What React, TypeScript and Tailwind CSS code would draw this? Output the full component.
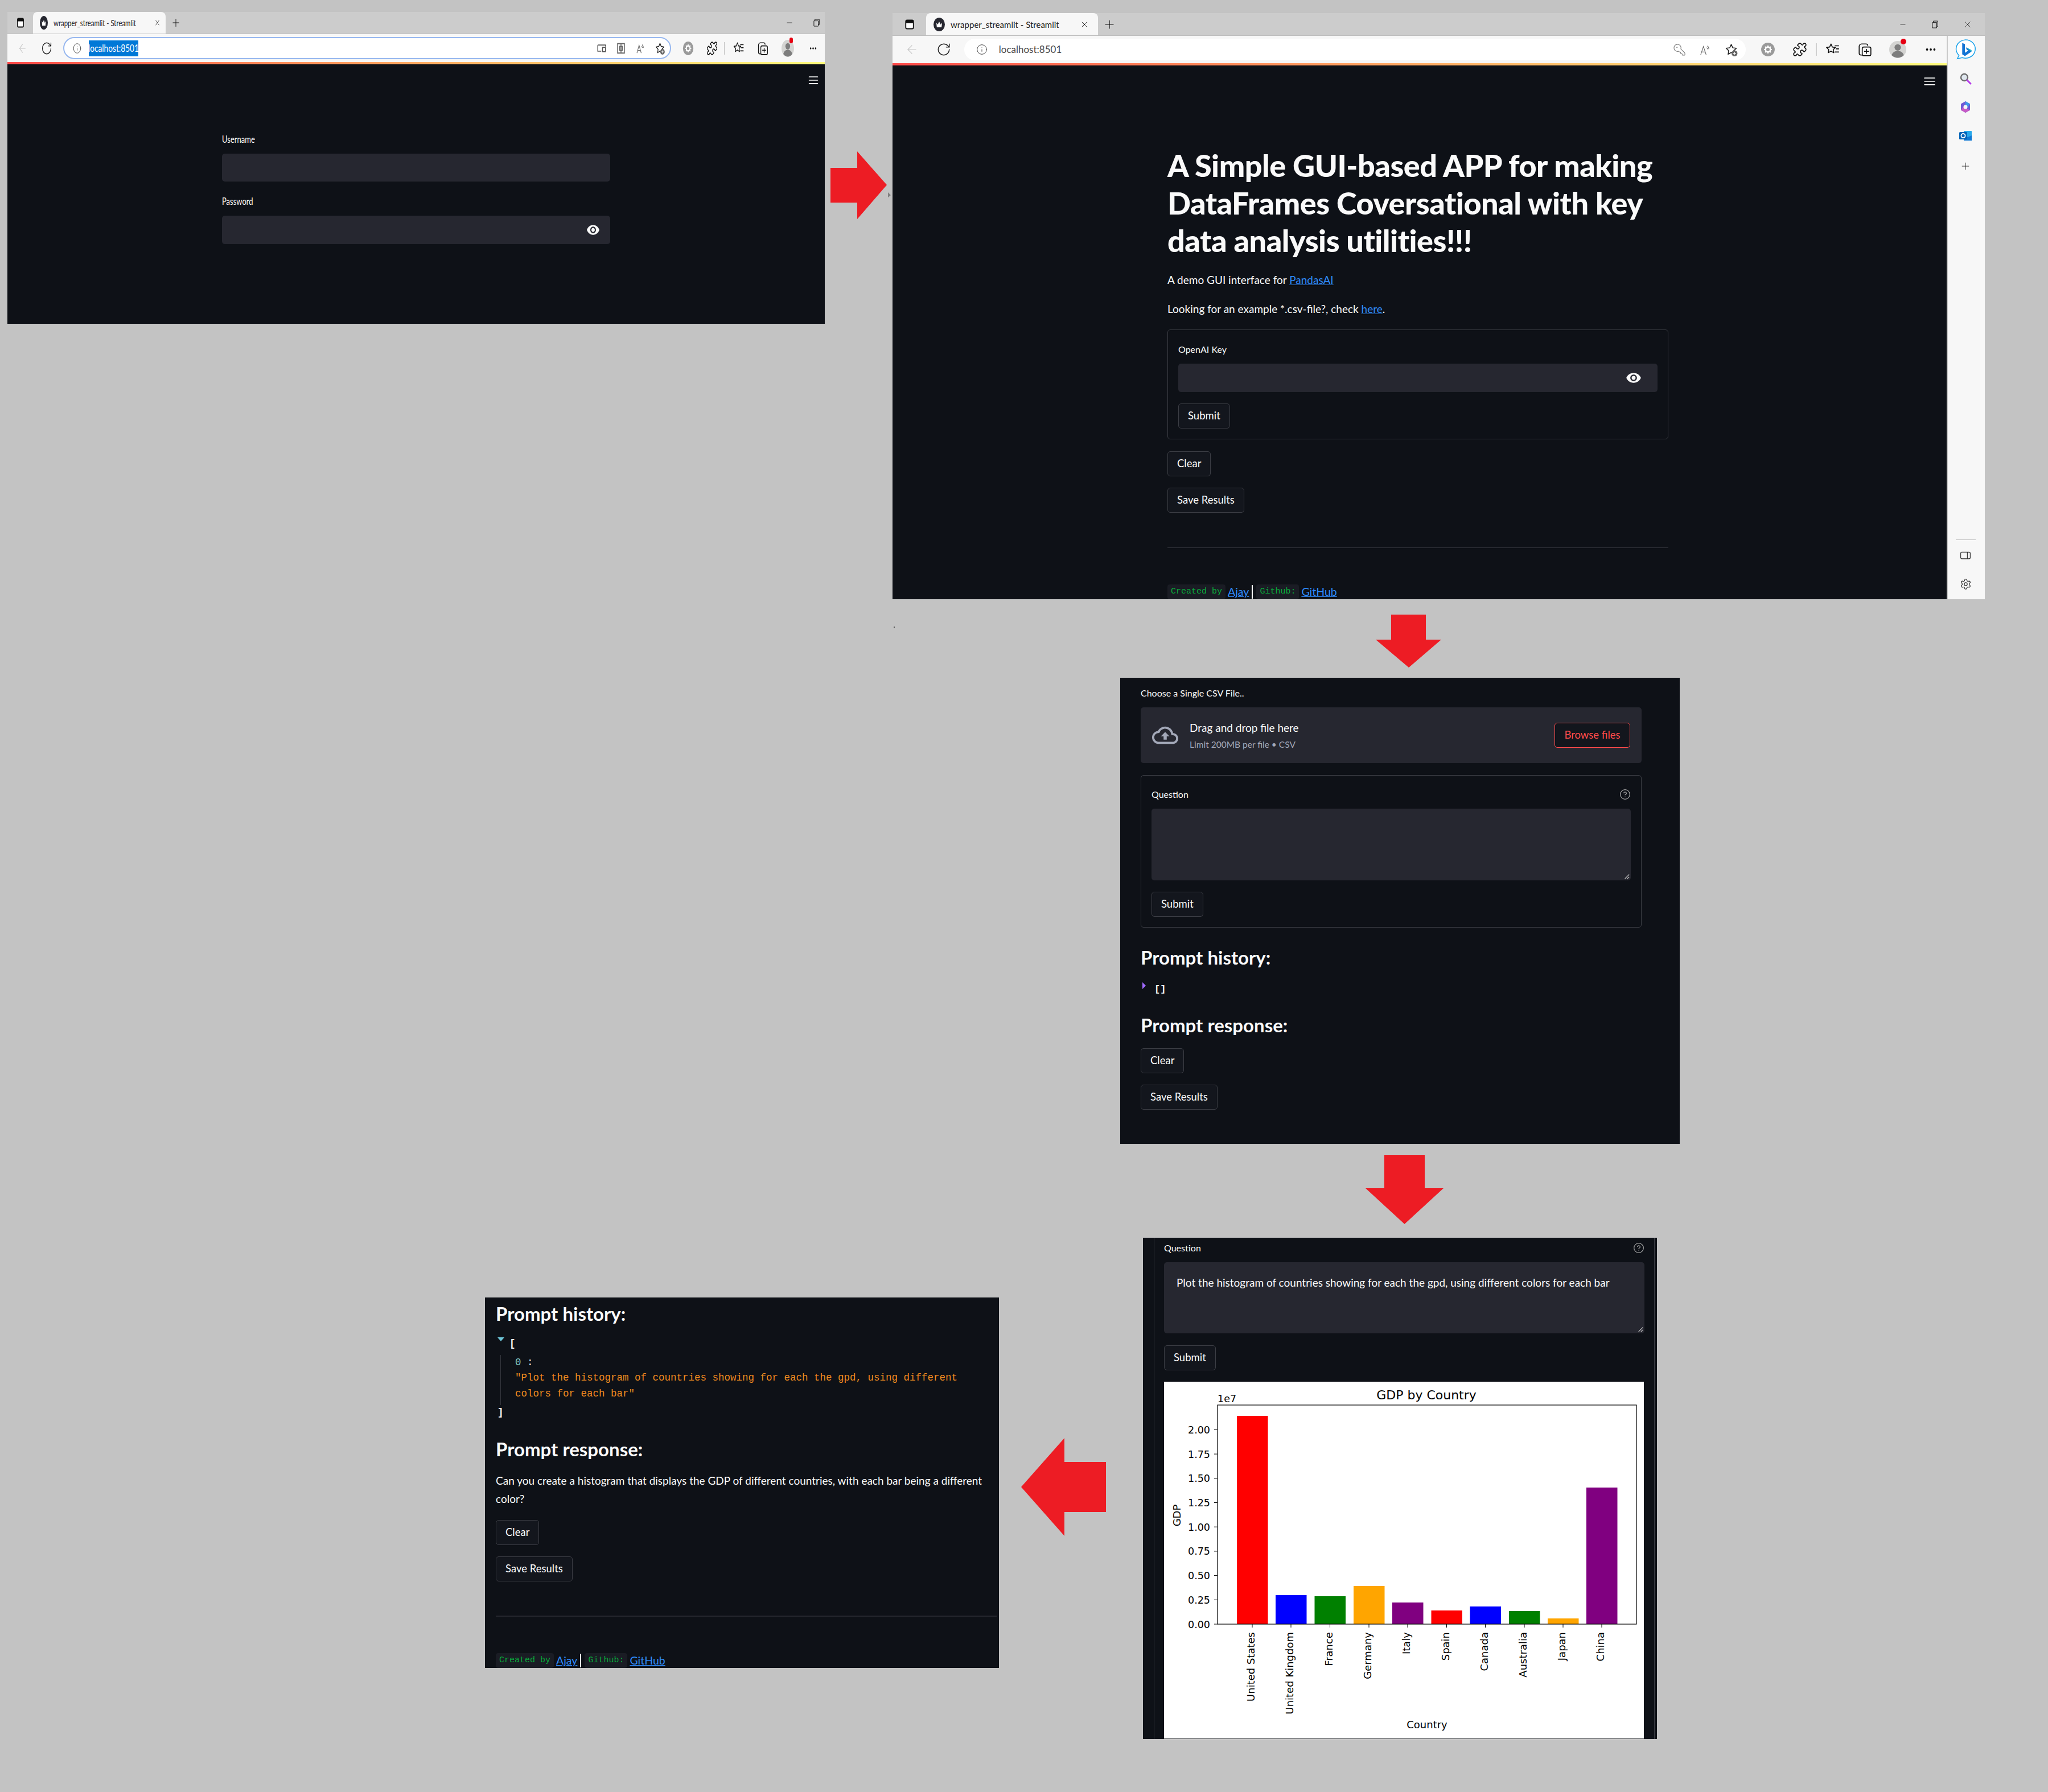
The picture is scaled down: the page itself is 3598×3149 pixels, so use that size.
import { ReactNode } from "react"
import { ArrowLeft, CircleHelp, Info, KeyRound, Menu, Minus, MoreHorizontal, Plus, Puzzle, RotateCw, Settings, X } from "lucide-react"

const EYE =
    "M12 4.5C7 4.5 2.73 7.61 1 12c1.73 4.39 6 7.5 11 7.5s9.27-3.11 11-7.5c-1.73-4.39-6-7.5-11-7.5zM12 17c-2.76 0-5-2.24-5-5s2.24-5 5-5 5 2.24 5 5-2.24 5-5 5zm0-8c-1.66 0-3 1.34-3 3s1.34 3 3 3 3-1.34 3-3-1.34-3-3-3z"
const CLOUD =
    "M19.35 10.04C18.67 6.59 15.64 4 12 4 9.11 4 6.6 5.64 5.35 8.04 2.34 8.36 0 10.91 0 14c0 3.31 2.69 6 6 6h13c2.76 0 5-2.24 5-5 0-2.64-2.05-4.78-4.65-4.96zM19 18H6c-2.21 0-4-1.79-4-4 0-2.05 1.53-3.76 3.56-3.97l1.07-.11.5-.95C8.08 7.14 9.94 6 12 6c2.62 0 4.88 1.86 5.39 4.43l.3 1.5 1.53.11c1.56.1 2.78 1.41 2.78 2.96 0 1.65-1.35 3-3 3zM8 13h2.55v3h2.9v-3H16l-4-4z"

// small toolbar glyphs, drawn on a 24 box and stretched for the squeezed window
function Glyph({ className, children }: { className: string; children: ReactNode }) {
    return (
        <svg viewBox="0 0 24 24" preserveAspectRatio="none" className={className}>
            {children}
        </svg>
    )
}

function FavStar() {
    return <path d="M12 3l2.6 5.6 6 .8-4.4 4.2 1.1 6-5.3-3-5.3 3 1.1-6L3.4 9.4l6-.8z" fill="none" stroke="#222" strokeWidth="1.5" strokeLinejoin="round" />
}

function Favicon({ className }: { className: string }) {
    return (
        <Glyph className={className}>
            <circle cx="12" cy="12" r="12" fill="#262730" />
            <path d="M6 9l3 3 3-5 3 5 3-3-1 8H7z" fill="#fff" />
        </Glyph>
    )
}

function Toolbar({ narrow }: { narrow: boolean }) {
    const slot = narrow ? "w-[42px]" : "w-[56px]"
    const icon = narrow ? "w-[20px] h-[26px]" : "w-[26px] h-[26px]"
    const small = narrow ? "w-[17px] h-[24px]" : "w-[24px] h-[24px]"
    return (
        <div className={`flex items-center bg-[#f7f7f7] ${narrow ? "h-[49px] pl-[6px]" : "h-[48px] pl-[6px]"}`}>
            <div className={`${slot} flex justify-center`}>
                <ArrowLeft preserveAspectRatio="none" strokeWidth={1.2} className={`${small} text-[#c4c4c4]`} />
            </div>
            <div className={`${slot} flex justify-center`}>
                <RotateCw preserveAspectRatio="none" strokeWidth={1.4} className={`${icon} text-[#222]`} />
            </div>
            {narrow ? (
                <div className="ml-[8px] flex h-[39px] w-[1069px] items-center rounded-full border-2 border-[#98b8ef] bg-white pl-[15px] pr-[8px]">
                    <Info preserveAspectRatio="none" strokeWidth={1.2} className="h-[20px] w-[15px] text-[#444]" />
                    <span className="ml-[13px] flex h-[28px] w-[87px] items-center justify-center bg-[#0078d7] text-white">
                        <span className="origin-center scale-x-[0.76] whitespace-nowrap text-[18px]">localhost:8501</span>
                    </span>
                    <div className="ml-auto flex items-center gap-[16px]">
                        <Glyph className="h-[20px] w-[18px]">
                            <path d="M3 5h18v3M3 5v13h8M14 10h7v9h-7z" fill="none" stroke="#555" strokeWidth="2" />
                        </Glyph>
                        <Glyph className="h-[22px] w-[18px]">
                            <path d="M4 3h16v18H4zM9 8h6v8H9zM12 3v18" fill="none" stroke="#666" strokeWidth="2" />
                        </Glyph>
                        <Glyph className="h-[22px] w-[18px]">
                            <path d="M4 21l5-15 5 15M6 16h6M16 5c2 1 3 3 3 6M15 8c1 .6 1.6 2 1.6 3" fill="none" stroke="#666" strokeWidth="1.4" />
                        </Glyph>
                        <Glyph className="h-[24px] w-[19px]">
                            <FavStar />
                            <circle cx="17.5" cy="18" r="5" fill="#666" />
                            <path d="M17.5 15.5v5M15 18h5" stroke="#fff" strokeWidth="1.2" />
                        </Glyph>
                    </div>
                </div>
            ) : (
                <div className="ml-[8px] flex h-[38px] w-[1376px] items-center rounded-full bg-white pl-[21px] pr-[13px]">
                    <Info strokeWidth={1.2} className="h-[20px] w-[20px] text-[#444]" />
                    <span className="ml-[20px] text-[17px] text-[#4a4a4a]">localhost:8501</span>
                    <div className="ml-auto flex items-center gap-[22px]">
                        <KeyRound strokeWidth={1.1} className="h-[23px] w-[23px] scale-x-[-1] text-[#777]" />
                        <Glyph className="h-[23px] w-[23px]">
                            <path d="M4 21l5-15 5 15M6 16h6M16 5c2 1 3 3 3 6M15 8c1 .6 1.6 2 1.6 3" fill="none" stroke="#666" strokeWidth="1.2" />
                        </Glyph>
                        <Glyph className="h-[25px] w-[25px]">
                            <FavStar />
                            <circle cx="17.5" cy="18" r="5" fill="#666" />
                            <path d="M17.5 15.5v5M15 18h5" stroke="#fff" strokeWidth="1.2" />
                        </Glyph>
                    </div>
                </div>
            )}
            <div className={`${narrow ? "ml-[9px]" : "ml-[11px]"} ${slot} flex justify-center`}>
                <div className="relative">
                    <Glyph className={icon}>
                        <circle cx="12" cy="12" r="11" fill="#9a9a9a" />
                        <circle cx="12" cy="12" r="4" fill="none" stroke="#fff" strokeWidth="2.4" />
                        <path d="M12 5.5v3M12 15.5v3M5.5 12h3M15.5 12h3M7.4 7.4l2 2M14.6 14.6l2 2M16.6 7.4l-2 2M9.4 14.6l-2 2" stroke="#fff" strokeWidth="2" />
                    </Glyph>
                </div>
            </div>
            <div className={`${slot} flex justify-center`}>
                <Puzzle preserveAspectRatio="none" strokeWidth={1.5} className={`${icon} text-[#111]`} />
            </div>
            <div className="h-[22px] w-[2px] shrink-0 bg-[#cfcfcf]" />
            <div className={`${narrow ? "ml-[3px]" : "ml-[1px]"} ${slot} flex justify-center`}>
                <Glyph className={icon}>
                    <path d="M9 3l2.2 5 5 .7-3.6 3.5.9 5-4.5-2.5-4.5 2.5.9-5L1.8 8.700l5-.7zM15 6h7M17 11h5M15 16h7" fill="none" stroke="#111" strokeWidth="1.5" strokeLinejoin="round" />
                </Glyph>
            </div>
            <div className={`${slot} flex justify-center`}>
                <Glyph className={icon}>
                    <path d="M8 21H6a3 3 0 0 1-3-3V7a4 4 0 0 1 4-4h7a3 3 0 0 1 3 3" fill="none" stroke="#111" strokeWidth="1.5" />
                    <rect x="8" y="8" width="14" height="14" rx="2.500" fill="#f7f7f7" stroke="#111" strokeWidth="1.5" />
                    <path d="M15 11v8M11 15h8" stroke="#111" strokeWidth="1.5" />
                </Glyph>
            </div>
            <div className={`${narrow ? "ml-[2px]" : "ml-[2px]"} ${slot} relative flex justify-center`}>
                <Glyph className={narrow ? "h-[30px] w-[22px]" : "h-[30px] w-[30px]"}>
                    <circle cx="12" cy="12" r="12" fill="#d4d4d2" />
                    <circle cx="12" cy="9" r="4.500" fill="#7d7d7d" />
                    <path d="M3.500 20c1-4 4.500-6 8.500-6s7.500 2 8.500 6a12 12 0 0 1-17 0z" fill="#7d7d7d" />
                </Glyph>
                <span className={`absolute top-[-4px] rounded-full bg-[#e60012] ${narrow ? "left-[24px] h-[10px] w-[6px]" : "left-[33px] h-[10px] w-[10px]"}`} />
            </div>
            <div className={`${narrow ? "ml-[2px]" : "ml-[2px]"} ${slot} flex justify-center`}>
                <MoreHorizontal preserveAspectRatio="none" strokeWidth={2.2} className={narrow ? "h-[20px] w-[15px] text-[#111]" : "h-[22px] w-[22px] text-[#111]"} />
            </div>
        </div>
    )
}

function EdgeRail() {
    return (
        <div className="flex w-[67px] flex-col items-center border-l-2 border-[#c9c9c9] bg-[#f7f7f7] pr-[3px]">
            <svg viewBox="0 0 40 40" className="mt-[5px] h-[38px] w-[38px]">
                <path d="M20 2a18 17 0 1 1-6 33l-9 2 3-6A18 17 0 0 1 20 2z" fill="#fff" stroke="#1aa2ea" strokeWidth="1.600" />
                <path d="M14 8l5 2v16l6-4-3-2-1-4 10 5v3l-12 8-5-3z" fill="#1474d4" />
                <path d="M21 16l10 5v3z" fill="#23c4c8" />
            </svg>
            <svg viewBox="0 0 24 24" className="mt-[21px] h-[24px] w-[24px]">
                <circle cx="10" cy="9" r="6" fill="#dfe7ee" stroke="#6e6e6e" strokeWidth="2.400" />
                <path d="M15 14l6 6" stroke="#b63bea" strokeWidth="3" strokeLinecap="round" />
            </svg>
            <svg viewBox="0 0 24 24" className="mt-[25px] h-[24px] w-[24px]">
                <path d="M12 2l8 4.500v11L12 22l-8-4.500v-11z" fill="#6f5bd6" />
                <path d="M12 2l8 4.500-4 5.500-4-2z" fill="#3f9be8" />
                <path d="M4 17.500L8 12l4 2 8 3.500-8 4.500z" fill="#c65bc6" />
                <circle cx="12" cy="12" r="3.500" fill="#f7f7f7" />
            </svg>
            <svg viewBox="0 0 24 24" className="mt-[26px] h-[24px] w-[24px]">
                <rect x="9" y="4" width="14" height="17" rx="1" fill="#28a8ea" />
                <path d="M9 12l7 3 7-3v9H9z" fill="#0f78d4" />
                <rect x="1" y="6" width="14" height="13" rx="1.500" fill="#0364b8" />
                <circle cx="8" cy="12.500" r="3.600" fill="none" stroke="#fff" strokeWidth="1.800" />
            </svg>
            <Plus strokeWidth={1} className="mt-[32px] h-[20px] w-[20px] text-[#111]" />
            <div className="mt-auto h-[1px] w-[35px] bg-[#b8b8b8]" />
            <svg viewBox="0 0 24 24" className="mt-[17px] h-[20px] w-[20px]">
                <rect x="2" y="5" width="20" height="14" rx="2" fill="none" stroke="#222" strokeWidth="1.300" />
                <path d="M16 5v14" stroke="#222" strokeWidth="1.300" />
            </svg>
            <Settings strokeWidth={1.3} className="mb-[16px] mt-[30px] h-[21px] w-[21px] text-[#222]" />
        </div>
    )
}

function Browser({ narrow, className, children }: { narrow: boolean; className: string; children: ReactNode }) {
    return (
        <div className={`absolute flex flex-col overflow-hidden ${className}`}>
            <div className={`flex shrink-0 items-stretch border-b border-[#bdbdbd] bg-[#cccccc] ${narrow ? "h-[39px]" : "h-[40px]"}`}>
                <div className={`flex items-center justify-center ${narrow ? "w-[45px]" : "w-[59px]"}`}>
                    <Glyph className={narrow ? "h-[20px] w-[14px]" : "h-[20px] w-[18px]"}>
                        <rect x="3" y="3" width="18" height="18" rx="3" fill="#fff" stroke="#111" strokeWidth="2.400" />
                        <rect x="3" y="3" width="18" height="6" fill="#111" />
                    </Glyph>
                </div>
                <div className={`flex items-center rounded-t-[8px] bg-[#f7f7f7] ${narrow ? "w-[233px] pl-[12px] pr-[9px]" : "w-[302px] pl-[13px] pr-[16px]"}`}>
                    <Favicon className={narrow ? "h-[24px] w-[14px]" : "h-[24px] w-[20px]"} />
                    <div className="ml-[10px] min-w-0 flex-1 whitespace-nowrap text-[#222]">
                        {narrow ? (
                            <span className="inline-block origin-left scale-x-[0.76] text-[15px]">wrapper_streamlit - Streamlit</span>
                        ) : (
                            <span className="text-[15px]">wrapper_streamlit - Streamlit</span>
                        )}
                    </div>
                    <X preserveAspectRatio="none" strokeWidth={1.3} className={narrow ? "h-[16px] w-[11px] text-[#111]" : "h-[16px] w-[16px] text-[#111]"} />
                </div>
                <div className={`flex items-center justify-center ${narrow ? "w-[36px]" : "w-[40px]"}`}>
                    <Plus preserveAspectRatio="none" strokeWidth={1.2} className={narrow ? "h-[22px] w-[18px] text-[#111]" : "h-[24px] w-[24px] text-[#111]"} />
                </div>
                <div className={`ml-auto flex items-center ${narrow ? "mr-[8px] gap-[33px]" : "mr-[21px] gap-[42px]"}`}>
                    <Minus preserveAspectRatio="none" strokeWidth={1.2} className="h-[14px] w-[14px] text-[#111]" />
                    <Glyph className="h-[16px] w-[14px]">
                        <path d="M5 7h13v14H5zM8 7V3h13v14h-3" fill="none" stroke="#111" strokeWidth="1.500" />
                    </Glyph>
                    {!narrow && <X strokeWidth={1} className="h-[18px] w-[18px] text-[#111]" />}
                </div>
            </div>
            <div className="flex min-h-0 flex-1">
                <div className="flex min-w-0 flex-1 flex-col">
                    <Toolbar narrow={narrow} />
                    <div className="h-[4px] shrink-0 bg-linear-to-r from-[#ff4b4b] to-[#fffd80]" />
                    <div className="relative min-h-0 flex-1 bg-[#0e1117]">
                        <Menu preserveAspectRatio="none" strokeWidth={2} className={`absolute top-[18px] text-[#fafafa] ${narrow ? "right-[9px] h-[20px] w-[22px]" : "right-[17px] h-[20px] w-[26px]"}`} />
                        {children}
                    </div>
                </div>
                {!narrow && <EdgeRail />}
            </div>
        </div>
    )
}

function Btn({ children, className = "" }: { children: ReactNode; className?: string }) {
    return (
        <div className={`flex h-[44px] w-fit items-center rounded-[5px] border border-[#3b3d44] bg-[#13161d] px-[16px] text-[18.5px] text-[#fafafa] ${className}`}>
            {children}
        </div>
    )
}

function EyeIcon() {
    return (
        <svg viewBox="0 0 24 24" className="h-[28px] w-[28px]">
            <path d={EYE} fill="#fafafa" />
        </svg>
    )
}

function Footer() {
    return (
        <div className="flex items-center">
            <code className="flex h-[26px] items-center rounded-[4px] bg-[#1a1c24] px-[6px] font-['Liberation_Mono'] text-[15px] text-[#09ab3b]">Created by</code>
            <a className="ml-[4px] text-[19.5px] leading-[26px] text-[#2f8cff] underline">Ajay</a>
            <span className="ml-[5px] h-[24px] w-[2px] bg-[#fafafa]" />
            <code className="ml-[6px] flex h-[26px] items-center rounded-[4px] bg-[#1a1c24] px-[6px] font-['Liberation_Mono'] text-[15px] text-[#09ab3b]">Github:</code>
            <a className="ml-[4px] text-[19.5px] leading-[26px] text-[#2f8cff] underline">GitHub</a>
        </div>
    )
}

const bars = [
    { name: "United States", x: 128, top: 60, color: "#ff0000" },
    { name: "United Kingdom", x: 196, top: 375, color: "#0000ff" },
    { name: "France", x: 264.500, top: 377, color: "#008000" },
    { name: "Germany", x: 333, top: 359, color: "#ffa500" },
    { name: "Italy", x: 401, top: 388, color: "#800080" },
    { name: "Spain", x: 469.500, top: 402, color: "#ff0000" },
    { name: "Canada", x: 537.500, top: 395, color: "#0000ff" },
    { name: "Australia", x: 606, top: 403, color: "#008000" },
    { name: "Japan", x: 674, top: 416, color: "#ffa500" },
    { name: "China", x: 742, top: 186, color: "#800080" },
]

const yTicks = ["0.00", "0.25", "0.50", "0.75", "1.00", "1.25", "1.50", "1.75", "2.00"]

function GdpChart() {
    return (
        <svg viewBox="0 0 843 627" className="h-[627px] w-[843px] bg-white font-['DejaVu_Sans']">
            <text x="461" y="31" textAnchor="middle" fontSize="22">GDP by Country</text>
            <text x="94" y="36" fontSize="17.500">1e7</text>
            <text x="0" y="0" transform="translate(29 235) rotate(-90)" textAnchor="middle" fontSize="18">GDP</text>
            <text x="462" y="609" textAnchor="middle" fontSize="18">Country</text>
            {bars.map((b) => (
                <rect key={b.name} x={b.x} y={b.top} width="54.500" height={426 - b.top} fill={b.color} />
            ))}
            <rect x="94" y="41" width="736" height="385" fill="none" stroke="#000" strokeWidth="1.200" />
            {yTicks.map((t, i) => (
                <g key={t}>
                    <line x1="88" x2="94" y1={426 - i * 42.700} y2={426 - i * 42.700} stroke="#000" strokeWidth="1" />
                    <text x="81" y={432.500 - i * 42.700} textAnchor="end" fontSize="17.500">{t}</text>
                </g>
            ))}
            {bars.map((b) => (
                <g key={b.name}>
                    <line x1={b.x + 27} x2={b.x + 27} y1="426" y2="432" stroke="#000" strokeWidth="1" />
                    <text x="0" y="0" transform={`translate(${b.x + 31} 440) rotate(-90)`} textAnchor="end" fontSize="18">{b.name}</text>
                </g>
            ))}
        </svg>
    )
}

function Arrow({ className, points }: { className: string; points: string }) {
    return (
        <svg className={`absolute ${className}`}>
            <polygon points={points} fill="#ed1c24" />
        </svg>
    )
}

export default function App() {
    return (
        <div className="relative h-[3149px] w-[3598px] overflow-hidden bg-[#c3c3c3] font-['Lato','Noto_Sans',sans-serif] text-[#fafafa]">
            {/* login */}
            <Browser narrow className="left-[13px] top-[21px] h-[548px] w-[1436px]">
                <div className="w-[682px] pt-[121px] ml-[377px]">
                    <div className="h-[22px] origin-left scale-x-[0.765] text-[17px] leading-[22px]">Username</div>
                    <div className="mt-[14px] h-[49px] rounded-[5px] bg-[#262730]" />
                    <div className="mt-[24px] h-[22px] origin-left scale-x-[0.765] text-[17px] leading-[22px]">Password</div>
                    <div className="mt-[14px] flex h-[50px] items-center justify-end rounded-[5px] bg-[#262730] pr-[18px]">
                        <svg viewBox="0 0 24 24" preserveAspectRatio="none" className="h-[28px] w-[24px]">
                            <path d={EYE} fill="#fafafa" />
                        </svg>
                    </div>
                </div>
            </Browser>

            {/* openai key page */}
            <Browser narrow={false} className="left-[1568px] top-[23px] h-[1030px] w-[1919px]">
                <div className="ml-[483px] w-[880px] pt-[143px]">
                    <h1 className="whitespace-nowrap text-[54px] font-black leading-[66px] tracking-[-0.5px]">
                        A Simple GUI-based APP for making
                        <br />
                        DataFrames Coversational with key
                        <br />
                        data analysis utilities!!!
                    </h1>
                    <p className="mt-[20px] text-[19px] leading-[32px]">
                        A demo GUI interface for <a className="text-[#2f8cff] underline">PandasAI</a>
                    </p>
                    <p className="mt-[19px] text-[19px] leading-[32px]">
                        Looking for an example *.csv-file?, check <a className="text-[#2f8cff] underline">here</a>.
                    </p>
                    <div className="mt-[20px] h-[193px] rounded-[5px] border border-[#3b3d44] px-[18px] pt-[23px]">
                        <div className="text-[16px] leading-[22px]">OpenAI Key</div>
                        <div className="mt-[14px] flex h-[50px] items-center justify-end rounded-[5px] bg-[#262730] pr-[28px]">
                            <EyeIcon />
                        </div>
                        <Btn className="mt-[20px]">Submit</Btn>
                    </div>
                    <Btn className="mt-[21px]">Clear</Btn>
                    <Btn className="mt-[20px]">Save Results</Btn>
                    <div className="mt-[61px] h-[1px] bg-[#33353c]" />
                    <div className="mt-[64px]">
                        <Footer />
                    </div>
                </div>
            </Browser>

            {/* upload page */}
            <div className="absolute left-[1968px] top-[1191px] h-[819px] w-[983px] bg-[#0e1117] pl-[36px] pt-[16px]">
                <div className="w-[880px]">
                    <div className="text-[16px] leading-[22px]">Choose a Single CSV File..</div>
                    <div className="mt-[14px] flex h-[98px] items-center rounded-[5px] bg-[#262730] pl-[20px] pr-[20px]">
                        <svg viewBox="0 0 24 24" className="h-[46px] w-[46px]">
                            <path d={CLOUD} fill="#a3a8b8" />
                        </svg>
                        <div className="ml-[20px]">
                            <div className="text-[19px] leading-[26px]">Drag and drop file here</div>
                            <div className="mt-[6px] text-[15.5px] leading-[20px] text-[#a3a8b8]">Limit 200MB per file • CSV</div>
                        </div>
                        <div className="ml-auto flex h-[44px] w-[133px] items-center justify-center rounded-[5px] border border-[#ff4b4b] bg-[#13161d] text-[18.5px] text-[#ff4b4b]">Browse files</div>
                    </div>
                    <div className="mt-[21px] h-[268px] rounded-[5px] border border-[#3b3d44] px-[18px] pt-[22px]">
                        <div className="flex items-center justify-between pr-[0px]">
                            <span className="text-[16px] leading-[22px]">Question</span>
                            <CircleHelp strokeWidth={1.5} className="h-[20px] w-[20px] text-[#a6a6a6]" />
                        </div>
                        <div className="relative mt-[14px] h-[126px] rounded-[5px] bg-[#262730]">
                            <Glyph className="absolute bottom-[2px] right-[2px] h-[10px] w-[10px]">
                                <path d="M4 22L22 4M14 22l8-8" stroke="#ccc" strokeWidth="3" />
                            </Glyph>
                        </div>
                        <Btn className="mt-[20px]">Submit</Btn>
                    </div>
                    <h2 className="mt-[30px] text-[33px] font-bold leading-[44px]">Prompt history:</h2>
                    <div className="mt-[25px] flex items-start font-['Liberation_Mono']">
                        <span className="ml-[3px] mt-[-3px] h-0 w-0 border-y-[6px] border-l-[6px] border-y-transparent border-l-[#a06bff]" />
                        <span className="ml-[15px] text-[17px] font-bold leading-[20px]">[]</span>
                    </div>
                    <h2 className="mt-[30px] text-[33px] font-bold leading-[44px]">Prompt response:</h2>
                    <Btn className="mt-[19px]">Clear</Btn>
                    <Btn className="mt-[20px]">Save Results</Btn>
                </div>
            </div>

            {/* answer page */}
            <div className="absolute left-[2008px] top-[2175px] h-[881px] w-[903px] overflow-hidden bg-[#0e1117] pl-[19px]">
                <div className="h-full w-[880px] border-x border-[#3b3d44] pl-[17px] pr-[17px]">
                    <div className="flex h-[43px] items-center justify-between pb-[7px]">
                        <span className="text-[16px]">Question</span>
                        <CircleHelp strokeWidth={1.5} className="h-[20px] w-[20px] text-[#a6a6a6]" />
                    </div>
                    <div className="relative h-[125px] rounded-[5px] bg-[#262730] px-[22px] pt-[23px] text-[19px] leading-[26px]">
                        Plot the histogram of countries showing for each the gpd, using different colors for each bar
                        <Glyph className="absolute bottom-[2px] right-[2px] h-[10px] w-[10px]">
                            <path d="M4 22L22 4M14 22l8-8" stroke="#ccc" strokeWidth="3" />
                        </Glyph>
                    </div>
                    <Btn className="mt-[21px]">Submit</Btn>
                    <div className="mt-[20px]">
                        <GdpChart />
                    </div>
                </div>
            </div>

            {/* response page */}
            <div className="absolute left-[852px] top-[2280px] h-[651px] w-[903px] overflow-hidden bg-[#0e1117] pl-[19px]">
                <div className="w-[880px]">
                    <h2 className="mt-[6px] text-[33px] font-bold leading-[44px]">Prompt history:</h2>
                    <div className="relative mt-[19px] h-[140px] font-['Liberation_Mono'] text-[17.500px] leading-[28px]">
                        <span className="absolute left-[3px] top-[1px] h-0 w-0 border-x-[6px] border-t-[7px] border-x-transparent border-t-[#6ec6d8]" />
                        <div className="pl-[24px] font-bold leading-[24px]">[</div>
                        <div className="ml-[8px] mt-[8px] h-[88px] border-l border-[#33353c] pl-[25px]">
                            <div className="leading-[26px] text-[#7fc4c4]">0 <span className="text-[#fafafa]">:</span></div>
                            <div className="text-[#ef8a1f]">
                                "Plot the histogram of countries showing for each the gpd, using different
                                <br />
                                colors for each bar"
                            </div>
                        </div>
                        <div className="pl-[3px] font-bold leading-[26px]">]</div>
                    </div>
                    <h2 className="mt-[35px] text-[33px] font-bold leading-[44px]">Prompt response:</h2>
                    <p className="mt-[18px] w-[855px] text-[19px] leading-[32px]">
                        Can you create a histogram that displays the GDP of different countries, with each bar being a different color?
                    </p>
                    <Btn className="mt-[21px]">Clear</Btn>
                    <Btn className="mt-[20px]">Save Results</Btn>
                    <div className="mt-[60px] h-[2px] bg-[#24262d]" />
                    <div className="mt-[64px]">
                        <Footer />
                    </div>
                </div>
            </div>

            {/* arrows between the shots */}
            <Arrow className="left-[1459px] top-[266px] h-[120px] w-[100px]" points="0,29 47,29 47,0 99,59 47,119 47,90 0,90" />
            <Arrow className="left-[2417px] top-[1080px] h-[94px] w-[116px]" points="27,0 88,0 88,44 115,44 58,93 0,44 27,44" />
            <Arrow className="left-[2399px] top-[2030px] h-[122px] w-[138px]" points="33,0 104,0 104,58 137,58 68.500,121 0,58 33,58" />
            <Arrow className="left-[1794px] top-[2527px] h-[173px] w-[150px]" points="0,86 76,0 76,42 149,42 149,130 76,130 76,172" />
            <svg className="absolute left-[1560px] top-[338px] h-[9px] w-[5px]">
                <polygon points="0,0 5,5 0,9" fill="#808080" />
            </svg>
            <span className="absolute left-[1570px] top-[1101px] h-[2px] w-[2px] bg-[#555]" />
        </div>
    )
}
